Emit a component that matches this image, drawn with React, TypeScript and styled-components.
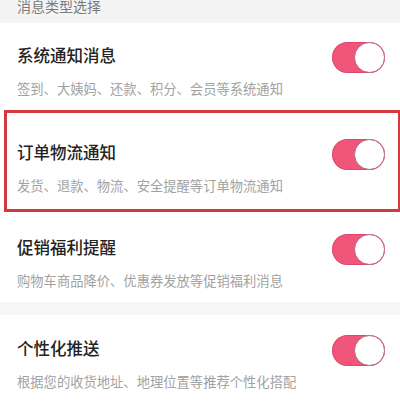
import React from "react";
import styled, { createGlobalStyle } from "styled-components";

const Global = createGlobalStyle`
  html, body { margin: 0; padding: 0; background: #ffffff; }
  body { font-family: "Noto Sans CJK SC", "Noto Sans", sans-serif; }
  * { box-sizing: border-box; }
`;

const Page = styled.div`
  width: 400px;
  height: 405px;
  overflow: hidden;
  background: #ffffff;
  display: flex;
  flex-direction: column;
`;

const SectionHeader = styled.div`
  height: 23px;
  flex: none;
  background: #f4f4f4;
  padding-left: 17px;
  overflow: hidden;
`;

const HeaderLabel = styled.div`
  margin-top: -4px;
  font-size: 14px;
  line-height: 20px;
  color: #7a7a7a;
`;

const Gap = styled.div`
  height: 13px;
  flex: none;
  background: #f6f6f6;
`;

const Row = styled.div<{ $pt: number; $pb: number; $highlight?: boolean }>`
  flex: none;
  display: flex;
  flex-direction: column;
  padding: ${(p) => p.$pt}px ${(p) => (p.$highlight ? 13 : 15)}px
    ${(p) => p.$pb}px ${(p) => (p.$highlight ? 10 : 17)}px;
  margin-left: ${(p) => (p.$highlight ? 4 : 0)}px;
  border: ${(p) => (p.$highlight ? "3px solid #d33a40" : "none")};
  border-right-width: ${(p) => (p.$highlight ? 2 : 0)}px;
`;

const TopLine = styled.div`
  height: 32px;
  display: flex;
  align-items: center;
  justify-content: space-between;
`;

const Title = styled.div`
  font-size: 16.5px;
  line-height: 24px;
  padding-bottom: 4px;
  font-weight: 500;
  color: #232323;
`;

const Sub = styled.div`
  margin-top: 6px;
  font-size: 13.3px;
  line-height: 20px;
  color: #a2a2a2;
  white-space: nowrap;
`;

const Track = styled.div<{ $on: boolean }>`
  width: 53px;
  height: 31px;
  border-radius: 16px;
  background: ${(p) => (p.$on ? "#f1557a" : "#e5e5e5")};
  box-shadow: inset 0 0 0 1px rgba(190, 60, 90, 0.45);
  position: relative;
  flex: none;
`;

const Knob = styled.div<{ $on: boolean }>`
  position: absolute;
  top: 0;
  ${(p) => (p.$on ? "right: 0;" : "left: 0;")}
  width: 31px;
  height: 31px;
  border-radius: 50%;
  background: #ffffff;
  border: 1.5px solid #b56a82;
`;

const Toggle = ({ on }: { on: boolean }) => (
  <Track $on={on}>
    <Knob $on={on} />
  </Track>
);

type Item = {
  title: string;
  sub: string;
  pt: number;
  pb: number;
  highlight?: boolean;
  gapBefore?: boolean;
};

const items: Item[] = [
  { title: "系统通知消息", sub: "签到、大姨妈、还款、积分、会员等系统通知", pt: 18, pb: 11 },
  { title: "订单物流通知", sub: "发货、退款、物流、安全提醒等订单物流通知", pt: 25, pb: 13, highlight: true },
  { title: "促销福利提醒", sub: "购物车商品降价、优惠券发放等促销福利消息", pt: 21, pb: 11 },
  { title: "个性化推送", sub: "根据您的收货地址、地理位置等推荐个性化搭配", pt: 19, pb: 12, gapBefore: true },
];

export default function App() {
  return (
    <Page>
      <Global />
      <SectionHeader>
        <HeaderLabel>消息类型选择</HeaderLabel>
      </SectionHeader>
      {items.map((it) => (
        <React.Fragment key={it.title}>
          {it.gapBefore && <Gap />}
          <Row $pt={it.pt} $pb={it.pb} $highlight={it.highlight}>
            <TopLine>
              <Title>{it.title}</Title>
              <Toggle on />
            </TopLine>
            <Sub>{it.sub}</Sub>
          </Row>
        </React.Fragment>
      ))}
    </Page>
  );
}
